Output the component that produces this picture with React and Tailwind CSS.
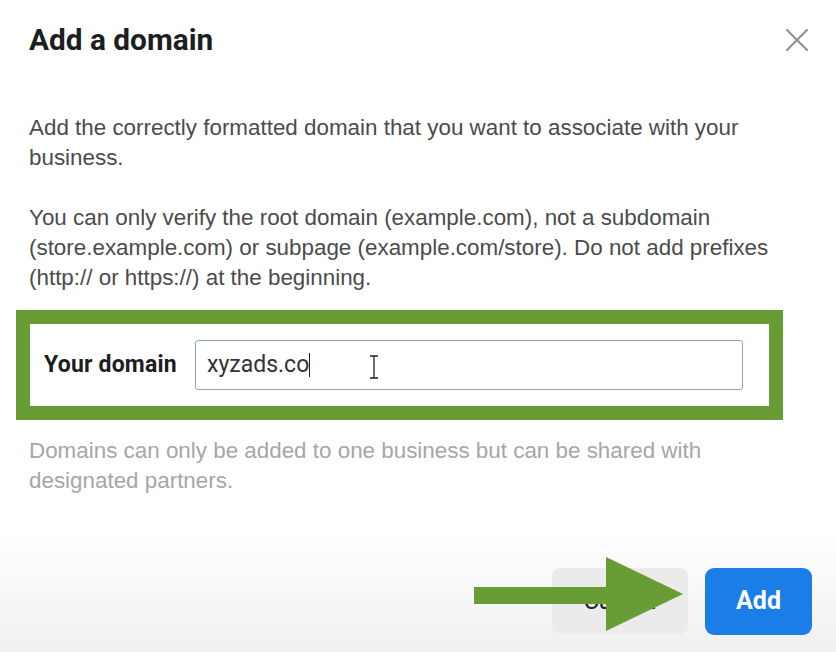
import React from 'react'

const AddDomainDialog = () => {
  return (
    <div className="relative w-[836px] h-[652px] overflow-hidden bg-white" style={{ fontFamily: '"Liberation Sans", Arial, sans-serif' }}>
      {/* Заголовок */}
      <div className="flex items-center justify-between pl-[29px] pr-[27px] pt-[20px] h-[60px]">
        <h1 className="text-[29.8px] font-bold text-[#1c1e21]" style={{ fontFamily: 'Roboto, sans-serif' }}>
          Add a domain
        </h1>
        <svg width="24" height="24" viewBox="0 0 24 24" className="text-[#8a8d91]">
          <path d="M2 2 L22 22 M22 2 L2 22" stroke="currentColor" strokeWidth="2" strokeLinecap="round" />
        </svg>
      </div>

      {/* Текст */}
      <div className="px-[29px] pt-[53px] text-[22.4px] leading-[30px] text-[#4b4b4b]">
        <p className="pr-[40px]">Add the correctly formatted domain that you want to associate with your business.</p>
        <p className="mt-[30px] pr-[30px]">
          You can only verify the root domain (example.com), not a subdomain (store.example.com) or subpage (example.com/store). Do not add prefixes (http:// or https://) at the beginning.
        </p>
      </div>

      {/* Поле домена */}
      <div className="ml-[16px] mt-[17px] w-[767px] h-[110px] border-[14px] border-[#689c34] bg-white flex items-center pl-[14px] pr-[26px]">
        <span className="text-[23px] font-bold text-[#1c1e21] w-[151px] tracking-[0.2px]" style={{ fontFamily: 'Roboto, sans-serif' }}>
          Your domain
        </span>
        <div className="relative flex-1 h-[50px] border border-[#8fa3bd] rounded-[3px] flex items-center pl-[11px] text-[23px] text-[#333]" style={{ fontFamily: 'Roboto, sans-serif' }}>
          <span>xyzads.co</span>
          <span className="w-[1px] h-[24px] bg-[#222]" />
          <svg width="10" height="24" viewBox="0 0 10 24" className="absolute left-[173px] top-[14px]">
            <path d="M1 1 H9 M5 1 V23 M1 23 H9" stroke="#222" strokeWidth="1.3" fill="none" />
          </svg>
        </div>
      </div>

      {/* Подсказка */}
      <p className="px-[29px] pt-[16px] pr-[120px] text-[22.4px] leading-[30px] text-[#a6a6a6]">
        Domains can only be added to one business but can be shared with designated partners.
      </p>

      {/* Кнопки */}
      <div className="absolute left-0 right-0 bottom-0 h-[120px] bg-gradient-to-b from-white to-[#f0f0f0] flex items-center justify-end gap-[17px] pr-[24px] pt-[18px]">
        <button className="w-[136px] h-[66px] rounded-[8px] bg-[#ebebeb] text-[24px] text-[#1c1e21]" style={{ fontFamily: 'Roboto, sans-serif' }}>
          Cancel
        </button>
        <button className="w-[107px] h-[67px] rounded-[9px] bg-[#1b7ee8] text-[25px] font-bold text-white" style={{ fontFamily: 'Roboto, sans-serif' }}>
          Add
        </button>
      </div>

      {/* Стрелка */}
      <svg className="absolute left-0 top-0" width="836" height="652" viewBox="0 0 836 652">
        <rect x="474" y="587" width="136" height="17" fill="#689c34" />
        <polygon points="606,557 683,594 606,631" fill="#689c34" />
      </svg>
    </div>
  )
}

export default function App() {
  return <AddDomainDialog />
}
